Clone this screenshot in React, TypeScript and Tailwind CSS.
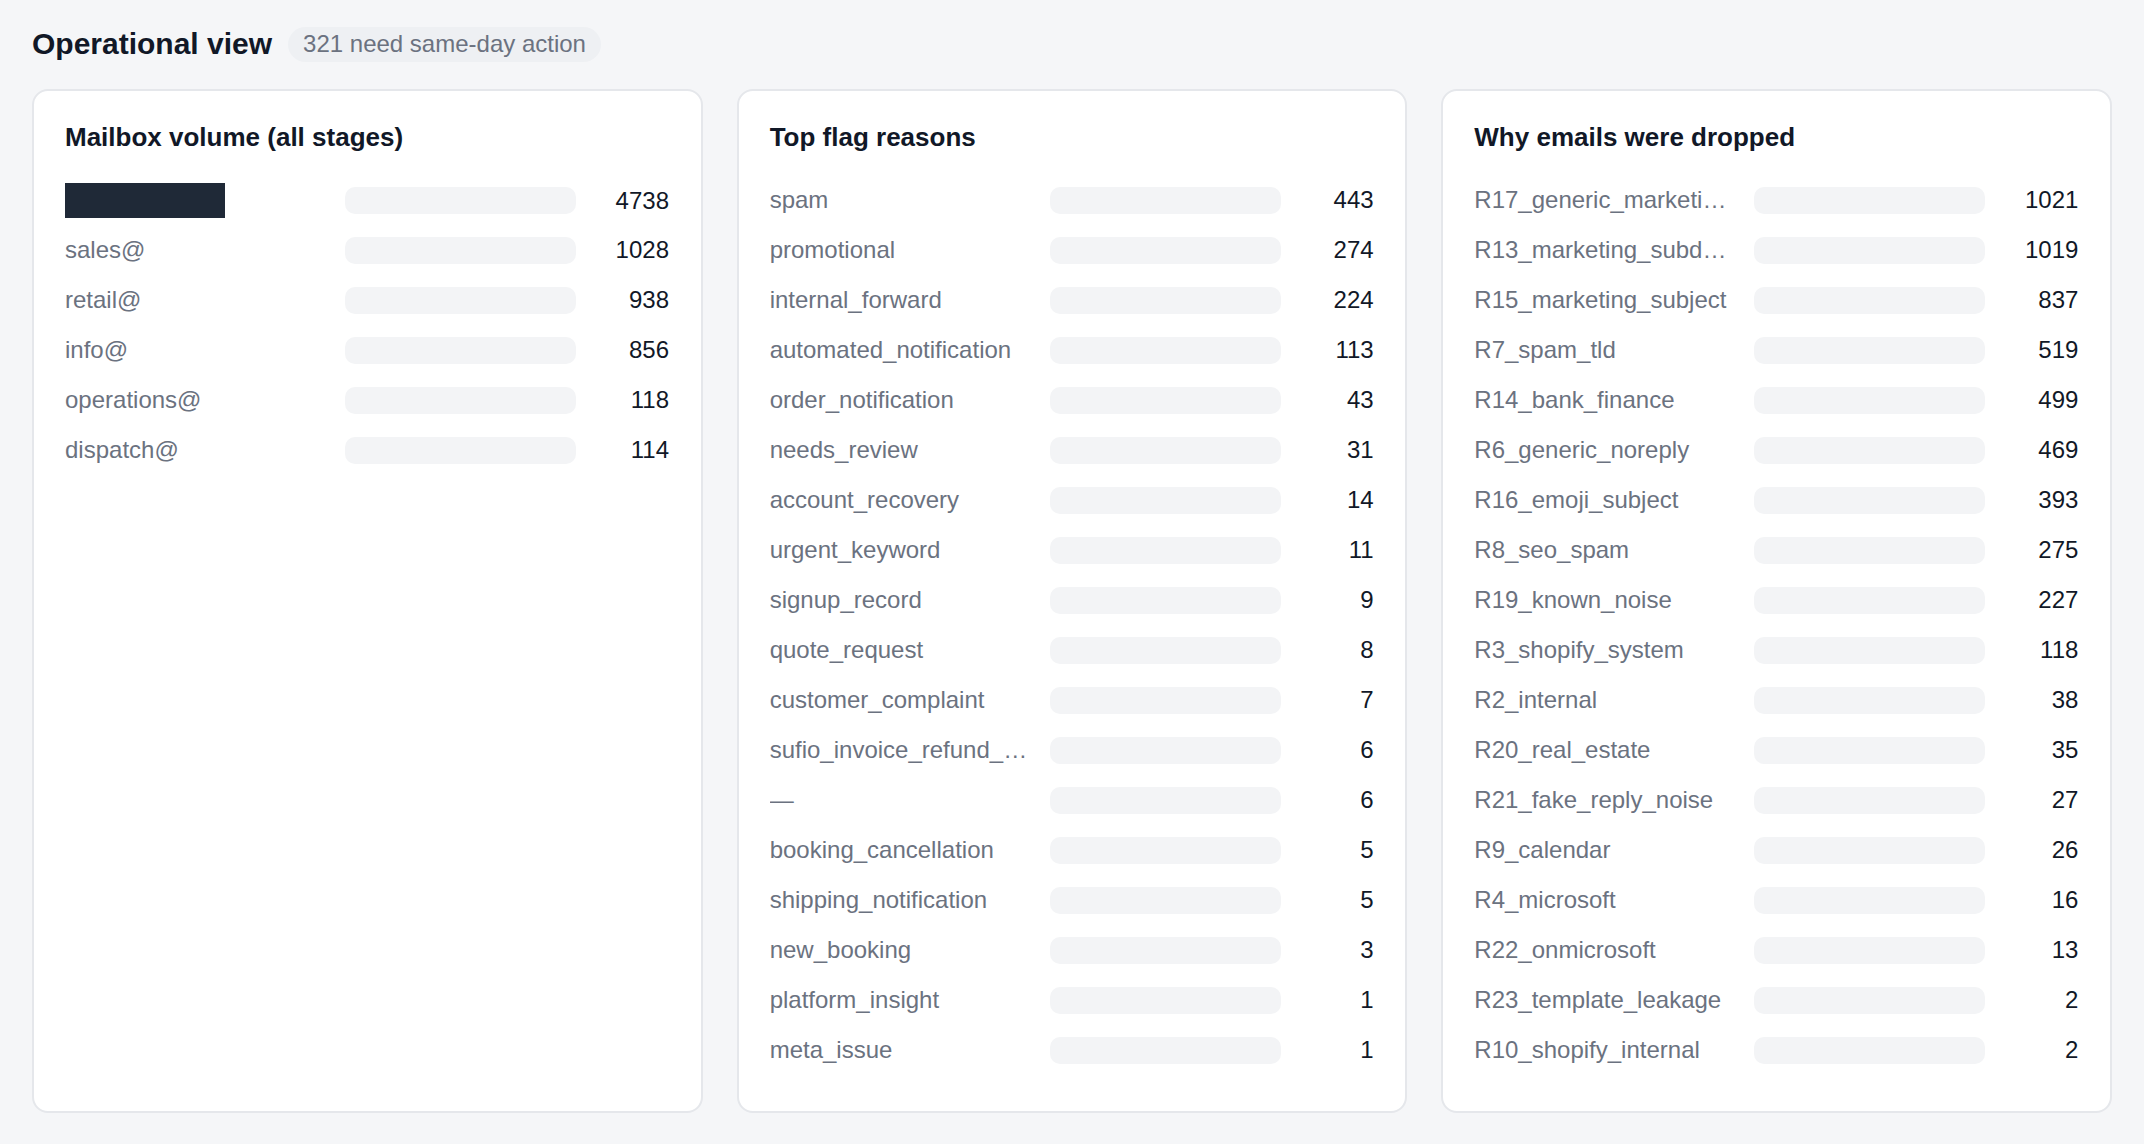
import React from 'react';

interface Row {
  label: string;
  value: number;
  redacted?: boolean;
}

interface PanelProps {
  title: string;
  rows: Row[];
}

const mailboxRows: Row[] = [
  { label: 'hidden', value: 4738, redacted: true },
  { label: 'sales@', value: 1028 },
  { label: 'retail@', value: 938 },
  { label: 'info@', value: 856 },
  { label: 'operations@', value: 118 },
  { label: 'dispatch@', value: 114 },
];

const flagRows: Row[] = [
  { label: 'spam', value: 443 },
  { label: 'promotional', value: 274 },
  { label: 'internal_forward', value: 224 },
  { label: 'automated_notification', value: 113 },
  { label: 'order_notification', value: 43 },
  { label: 'needs_review', value: 31 },
  { label: 'account_recovery', value: 14 },
  { label: 'urgent_keyword', value: 11 },
  { label: 'signup_record', value: 9 },
  { label: 'quote_request', value: 8 },
  { label: 'customer_complaint', value: 7 },
  { label: 'sufio_invoice_refund_…', value: 6 },
  { label: '—', value: 6 },
  { label: 'booking_cancellation', value: 5 },
  { label: 'shipping_notification', value: 5 },
  { label: 'new_booking', value: 3 },
  { label: 'platform_insight', value: 1 },
  { label: 'meta_issue', value: 1 },
];

const dropRows: Row[] = [
  { label: 'R17_generic_marketi…', value: 1021 },
  { label: 'R13_marketing_subd…', value: 1019 },
  { label: 'R15_marketing_subject', value: 837 },
  { label: 'R7_spam_tld', value: 519 },
  { label: 'R14_bank_finance', value: 499 },
  { label: 'R6_generic_noreply', value: 469 },
  { label: 'R16_emoji_subject', value: 393 },
  { label: 'R8_seo_spam', value: 275 },
  { label: 'R19_known_noise', value: 227 },
  { label: 'R3_shopify_system', value: 118 },
  { label: 'R2_internal', value: 38 },
  { label: 'R20_real_estate', value: 35 },
  { label: 'R21_fake_reply_noise', value: 27 },
  { label: 'R9_calendar', value: 26 },
  { label: 'R4_microsoft', value: 16 },
  { label: 'R22_onmicrosoft', value: 13 },
  { label: 'R23_template_leakage', value: 2 },
  { label: 'R10_shopify_internal', value: 2 },
];

const Panel: React.FC<PanelProps> = ({ title, rows }) => (
  <section className="bg-white border-2 border-[#e5e7eb] rounded-2xl px-[31px] pt-[30px] pb-[44px]">
    <h2 className="text-[26px] leading-[32px] font-bold text-[#111827]">{title}</h2>
    <ul className="mt-[30px] flex flex-col gap-[16px]">
      {rows.map((row, i) => (
        <li
          key={i}
          className="grid grid-cols-[268px_231px_81px] gap-x-[12px] items-center h-[34px]"
        >
          {row.redacted ? (
            <div className="w-[160px] h-[35px] bg-[#1f2937]" />
          ) : (
            <span className="whitespace-nowrap overflow-hidden text-[24px] leading-[34px] text-[#6b7280]">
              {row.label}
            </span>
          )}
          <div className="h-[27px] rounded-[10px] bg-[#f3f4f6]" />
          <span className="text-right text-[24px] leading-[34px] text-[#111827]">{row.value}</span>
        </li>
      ))}
    </ul>
  </section>
);

export default function App() {
  return (
    <div
      className="min-h-screen bg-[#f5f6f8] px-[32px] pt-[26px] pb-[32px]"
      style={{ fontFamily: '"Liberation Sans", Arial, sans-serif' }}
    >
      <header className="flex items-center gap-[16px] h-[36px] mb-[27px]">
        <h1 className="text-[30px] leading-[36px] font-bold text-[#111827]">Operational view</h1>
        <span className="h-[35px] flex items-center px-[15px] rounded-full bg-[#eef0f3] text-[24px] text-[#6b7280]">
          321 need same-day action
        </span>
      </header>

      <div className="grid grid-cols-3 gap-[34px]">
        <Panel title="Mailbox volume (all stages)" rows={mailboxRows} />
        <Panel title="Top flag reasons" rows={flagRows} />
        <Panel title="Why emails were dropped" rows={dropRows} />
      </div>
    </div>
  );
}
